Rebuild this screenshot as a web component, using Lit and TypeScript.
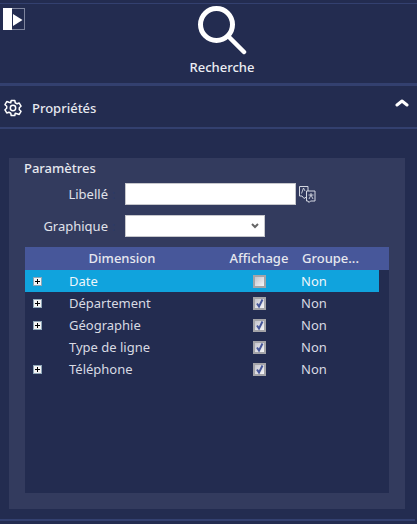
import { LitElement, html, css } from "lit";
import { customElement } from "lit/decorators.js";

const rows = [
  { name: "Date", plus: true, checked: false, selected: true },
  { name: "Département", plus: true, checked: true },
  { name: "Géographie", plus: true, checked: true },
  { name: "Type de ligne", plus: false, checked: true },
  { name: "Téléphone", plus: true, checked: true },
];

@customElement("app-root")
export class AppRoot extends LitElement {
  static styles = css`
    :host { display: block; width: 417px; height: 524px; overflow: hidden; background: #232c50; font-family: "Noto Sans", "Open Sans", sans-serif; color: #e6e8ef; font-size: 13px; }
    .topline { height: 1px; margin-top: 3px; background: #33406f; }
    .search { height: 79px; box-sizing: border-box; position: relative; display: flex; flex-direction: column; align-items: center; padding-left: 27px; }
    .toggle { position: absolute; left: 3px; top: 4px; width: 22px; height: 22px; box-sizing: border-box; border: 1px solid #7d849d; }
    .toggle i { position: absolute; left: -1px; top: -1px; width: 9px; height: 22px; background: #fff; }
    .toggle svg { position: absolute; left: 9px; top: 5px; }
    .lens { display: block; margin-top: 1px; }
    .search span { font-size: 13px; font-weight: 500; line-height: 17px; margin-top: 4px; color: #eceef3; }
    .sep { height: 3px; background: #33406f; }
    .sep.thin { height: 2px; }
    .prop { height: 41px; display: flex; align-items: center; padding: 2px 8px 0 4px; box-sizing: border-box; gap: 10px; font-weight: 500; font-size: 13px; }
    .prop .t { flex: 1; }
    .prop .chev { margin-top: -9px; }
    .panel { margin: 29px 12px 0 9px; height: 351px; background: #333b5e; box-sizing: border-box; padding: 2px 16px 0 16px; }
    .title { font-size: 13px; font-weight: 500; line-height: 17px; margin-left: -1px; }
    .field { display: grid; grid-template-columns: 83px 1fr; column-gap: 17px; align-items: center; height: 22px; margin-top: 6px; }
    .field.second { margin-top: 10px; }
    .field label { text-align: right; font-size: 13px; color: #e0e2ea; position: relative; }
    .field label b { position: absolute; left: 87px; top: 0; font-weight: 400; color: #2b3a66; }
    .field .in { display: flex; align-items: center; gap: 3px; }
    .input { width: 171px; height: 22px; box-sizing: border-box; background: #fff; border: 1px solid #c6c7cc; }
    .select { width: 140px; height: 22px; box-sizing: border-box; background: #fff; border: 1px solid #c6c7cc; display: flex; align-items: center; justify-content: flex-end; padding-right: 5px; }
    .grid { margin-top: 10px; height: 246px; background: #232c50; width: 364px; }
    .head { height: 23px; background: #47579a; display: grid; grid-template-columns: 194px 80px 90px; align-items: center; font-weight: 500; font-size: 13px; padding-bottom: 1px; box-sizing: border-box; }
    .head div { text-align: center; }
    .head div:last-child { text-align: left; padding-left: 3px; }
    .row { height: 22px; width: 354px; display: grid; grid-template-columns: 44px 150px 80px 1fr; align-items: center; font-size: 13px; color: #d8dae3; }
    .row .non { padding-left: 2px; }
    .row.sel { background: #10a3dd; color: #eef6fb; }
    .plus { width: 9px; height: 9px; margin-left: 8px; box-sizing: border-box; border: 1px solid #8fa7b8; background: #f4f4f4; position: relative; display: block; }
    .plus::before { content: ""; position: absolute; left: 1px; right: 1px; top: 3px; height: 1px; background: #000; }
    .plus::after { content: ""; position: absolute; top: 1px; bottom: 1px; left: 3px; width: 1px; background: #000; }
    .check { width: 13px; height: 13px; box-sizing: border-box; border: 2px solid #a4a4a8; background: linear-gradient(135deg, #c4c4cc, #f6f6f8); justify-self: center; display: block; }
    .check svg { display: block; margin: -1px; }
    .bottom { margin-top: 10px; height: 2px; width: 415px; background: #33406f; }
  `;

  render() {
    return html`
      <div class="topline"></div>
      <div class="search">
        <div class="toggle"><i></i>
          <svg width="10" height="12" viewBox="0 0 10 12"><path d="M0 0 L9.500 6 L0 12 Z" fill="#fff"/></svg>
        </div>
        <svg class="lens" width="50" height="50" viewBox="0 0 50 50" fill="none" stroke="#fff" stroke-linecap="round">
          <circle cx="19.500" cy="19.500" r="16" stroke-width="5"/>
          <path d="M33 33 L47 47" stroke-width="4.500"/>
        </svg>
        <span>Recherche</span>
      </div>
      <div class="sep"></div>
      <div class="prop">
        <svg width="18" height="18" viewBox="0 0 24 24" fill="none" stroke="#fff" stroke-width="2" stroke-linejoin="round">
          <path d="M9.600 2h4.800l.6 3 2.400 1.400 2.900-1 2.400 4.200-2.300 2v2.800l2.300 2-2.400 4.200-2.900-1L15 19l-.6 3H9.600L9 19l-2.400-1.400-2.900 1-2.400-4.200 2.300-2v-2.800l-2.300-2 2.400-4.200 2.900 1L9 5z"/>
          <circle cx="12" cy="12" r="3.600"/>
        </svg>
        <span class="t">Propriétés</span>
        <svg class="chev" width="14" height="8" viewBox="0 0 14 8" fill="none" stroke="#fff" stroke-width="3" stroke-linecap="round" stroke-linejoin="round"><path d="M2 6 L7 2 L12 6"/></svg>
      </div>
      <div class="sep thin"></div>
      <div class="panel">
        <div class="title">Paramètres</div>
        <div class="field"><label>Libellé<b>:</b></label>
          <div class="in"><div class="input"></div>
            <svg width="17" height="18" viewBox="0 0 17 18" fill="none" stroke="#d5d8e2" stroke-width="1">
              <path d="M.5 1.500h8.500v9.500L5 13.500 3 11H.5z"/>
              <path d="M7.500 6H16v10h-4.500L10 17.500 9 16H7.500z" fill="#333b5e"/>
              <path d="M2.500 8.500 L4.500 3 L6 6" stroke-width=".9"/>
              <path d="M9.500 10h5M12 8v2M10 14l2-4 2 4" stroke-width=".9"/>
            </svg>
          </div>
        </div>
        <div class="field second"><label>Graphique<b>:</b></label>
          <div class="in"><div class="select">
            <svg width="8" height="6" viewBox="0 0 8 6" fill="none" stroke="#666" stroke-width="2"><path d="M1 1 L4 4 L7 1"/></svg>
          </div></div>
        </div>
        <div class="grid">
          <div class="head"><div>Dimension</div><div>Affichage</div><div>Groupe...</div></div>
          ${rows.map((r) => html`
            <div class="row ${r.selected ? "sel" : ""}">
              <span>${r.plus ? html`<span class="plus"></span>` : ""}</span>
              <span>${r.name}</span>
              <span class="check">${r.checked ? html`<svg width="11" height="11" viewBox="0 0 11 11" fill="none" stroke="#47579a" stroke-width="2"><path d="M3 5.500 L5 8.500 L8.500 1.500"/></svg>` : ""}</span>
              <span class="non">Non</span>
            </div>`)}
        </div>
      </div>
      <div class="bottom"></div>
    `;
  }
}
